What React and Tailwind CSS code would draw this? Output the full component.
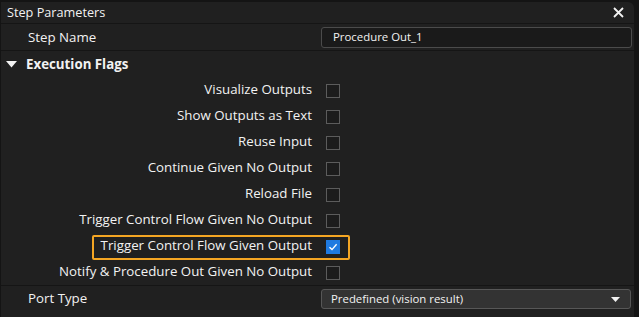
import React from 'react';

const flags = [
  ['Visualize Outputs', false],
  ['Show Outputs as Text', false],
  ['Reuse Input', false],
  ['Continue Given No Output', false],
  ['Reload File', false],
  ['Trigger Control Flow Given No Output', false],
  ['Trigger Control Flow Given Output', true],
  ['Notify & Procedure Out Given No Output', false],
];

function Checkbox({ checked }) {
  if (checked) {
    return (
      <div className="w-[14px] h-[14px] bg-[#1f7ae0] flex items-center justify-center">
        <svg width="10" height="10" viewBox="0 0 10 10">
          <path d="M1.5 5.2 L4 7.6 L8.6 2.2" stroke="white" strokeWidth="1.4" fill="none" />
        </svg>
      </div>
    );
  }
  return <div className="w-[14px] h-[14px] border border-[#5c5c5c] bg-[#1c1c1c]" />;
}

export default function App() {
  return (
    <div className="w-[639px] h-[317px] bg-[#141414] pt-[2px] pl-[1px] overflow-hidden" style={{ fontFamily: '"Open Sans", sans-serif' }}>
      <div className="relative w-[633px] h-[315px] bg-[#202020] rounded-tr-[6px] text-[#f2f2f2] text-[13.3px]">
        {/* header */}
        <div className="h-[22px] flex items-center justify-between pl-[6px] pr-[10px] border-b border-[#151515]">
          <span className="text-[12.7px]">Step Parameters</span>
          <svg width="11" height="11" viewBox="0 0 11 11">
            <path d="M1 1 L10 10 M10 1 L1 10" stroke="#f2f2f2" strokeWidth="1.8" />
          </svg>
        </div>

        {/* step name */}
        <div className="h-[27px] grid grid-cols-[320px_1fr] items-center border-b border-[#151515]">
          <span className="pl-[27px] pt-[1px]">Step Name</span>
          <div className="h-[21px] mr-[2px] rounded-[3px] border border-[#4b4b4b] bg-[#1a1a1a] flex items-center pl-[11px] text-[11.4px]">
            Procedure Out_1
          </div>
        </div>

        {/* execution flags */}
        <div className="h-[26px] flex items-center pl-[5px] pt-[1px] gap-[9px] font-bold">
          <svg width="11" height="7" viewBox="0 0 11 7">
            <path d="M0 0 L11 0 L5.5 6.5 Z" fill="#f2f2f2" />
          </svg>
          <span>Execution Flags</span>
        </div>

        <div className="flex flex-col border-b border-[#151515]">
          {flags.map(([label, checked]) => (
            <div key={label} className="h-[26px] grid grid-cols-[320px_1fr] items-center">
              <span className="text-right pr-[9px]">{label}</span>
              <div className="pl-[5px] pt-[1px]">
                <Checkbox checked={checked} />
              </div>
            </div>
          ))}
        </div>

        {/* port type */}
        <div className="h-[26px] grid grid-cols-[320px_1fr] items-center">
          <span className="pl-[27px]">Port Type</span>
          <div className="h-[20px] mr-[3px] rounded-[3px] border border-[#575757] bg-[#333333] flex items-center justify-between pl-[9px] pr-[10px] text-[11.4px]">
            <span>Predefined (vision result)</span>
            <svg width="9" height="5" viewBox="0 0 9 5">
              <path d="M0 0 L9 0 L4.5 5 Z" fill="#f2f2f2" />
            </svg>
          </div>
        </div>

        {/* highlight annotation */}
        <div className="absolute left-[91px] top-[233px] w-[258px] h-[25px] border-2 border-[#f5a623] rounded-[2px]" />
      </div>
    </div>
  );
}
